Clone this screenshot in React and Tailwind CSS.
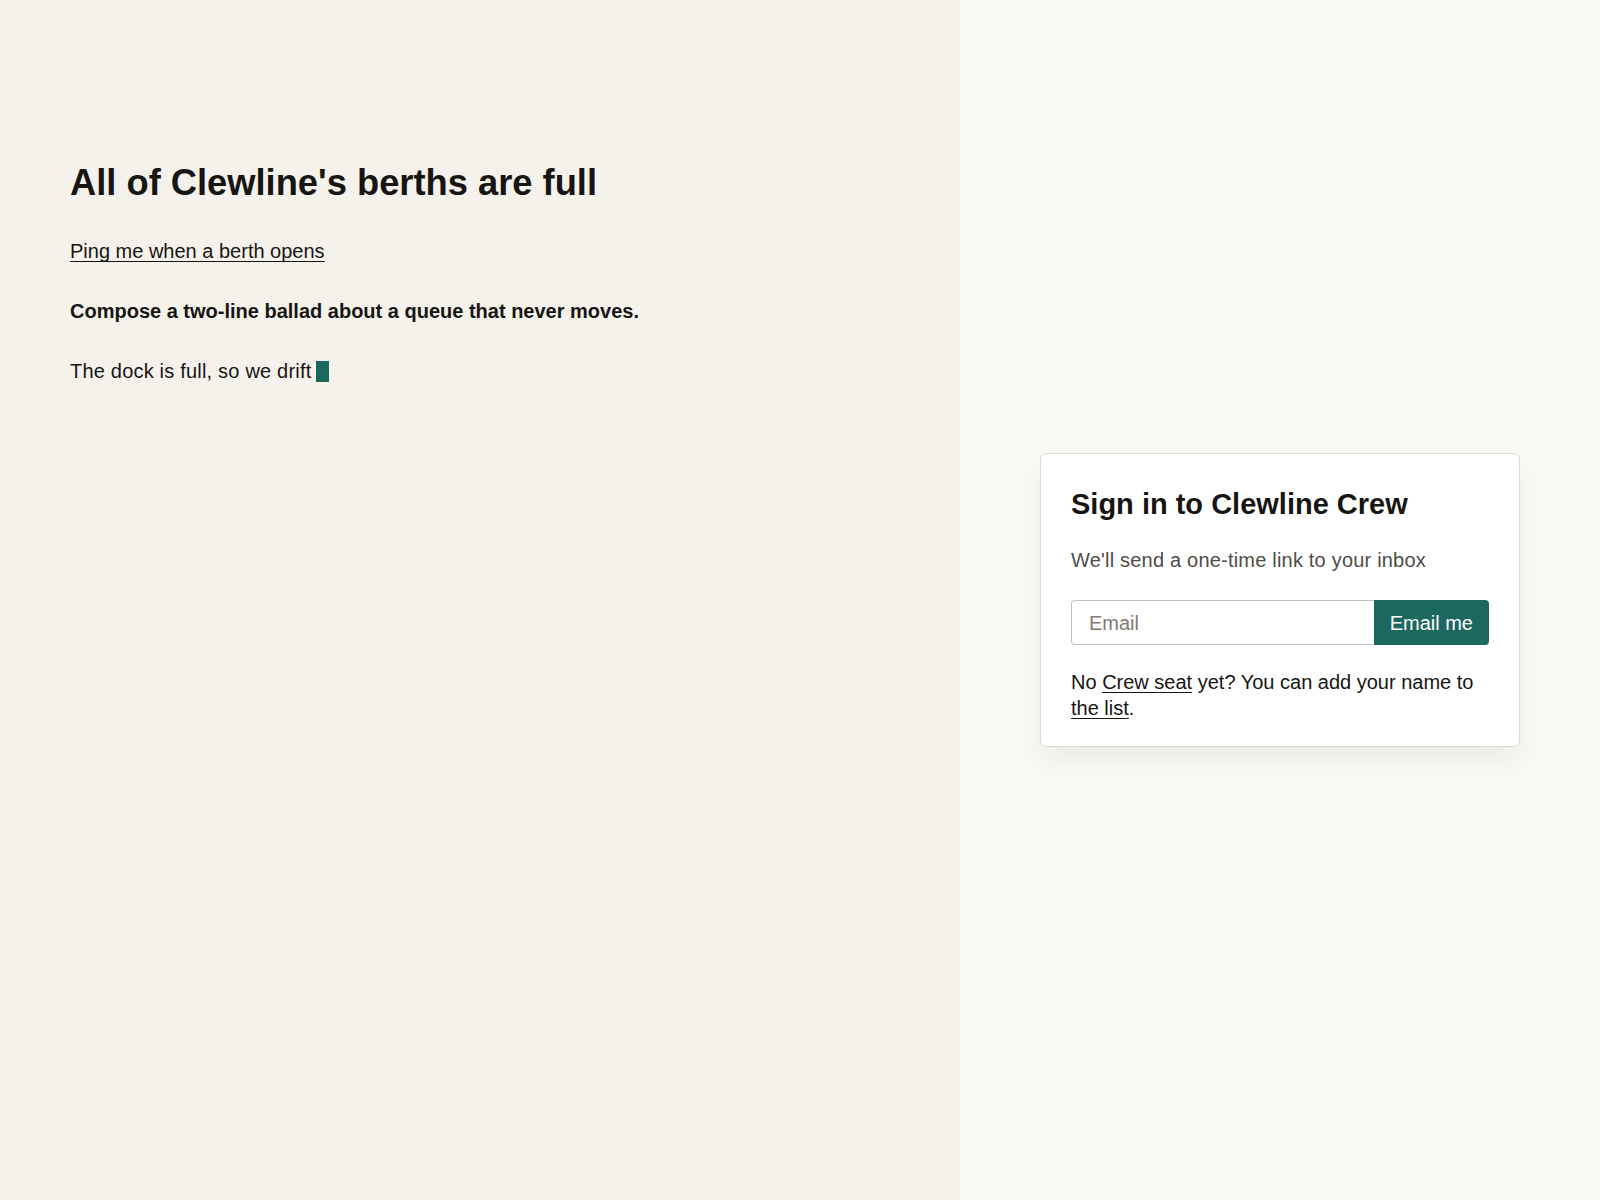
import React from 'react';

const font = { fontFamily: '"Liberation Sans", Arial, sans-serif' };

const linkClass = 'underline decoration-1 underline-offset-[3px] [text-decoration-skip-ink:none]';

const WaitlistPanel = () => (
  <section className="flex w-[960px] shrink-0 flex-col bg-[#f5f2ec] px-[70px] pt-[160px]">
    <h1 className="text-[36.3px] font-bold leading-[45px] text-[#171512]">All of Clewline's berths are full</h1>
    <a href="#" className={`mt-[31px] self-start text-[20px] leading-[30px] text-[#171512] ${linkClass}`}>
      Ping me when a berth opens
    </a>
    <p className="mt-[30px] text-[20px] font-bold leading-[30px] text-[#171512]">
      Compose a two-line ballad about a queue that never moves.
    </p>
    <p className="mt-[30px] flex items-center text-[20px] leading-[30px] tracking-[0.01em] text-[#171512]">
      The dock is full, so we drift
      <span className="ml-[5px] inline-block h-[21px] w-[13px] bg-[#1c675e]" />
    </p>
  </section>
);

const SignInCard = () => (
  <div className="w-[480px] rounded-md border border-[#dfdbd3] bg-white px-[30px] pt-[32px] pb-[25px] shadow-[0_14px_32px_rgba(60,50,30,0.08)]">
    <h2 className="text-[29px] font-bold leading-[36px] text-[#171512]">Sign in to Clewline Crew</h2>
    <p className="mt-[24px] text-[20px] leading-[28px] tracking-[0.01em] text-[#4f4c47]">We'll send a one-time link to your inbox</p>
    <form className="mt-[26px] flex h-[45px]" onSubmit={(e) => e.preventDefault()}>
      <input
        type="email"
        placeholder="Email"
        className="min-w-0 flex-1 rounded-l-[4px] border border-r-0 border-[#c6c2ba] px-[17px] text-[20px] text-[#171512] placeholder:text-[#807c75] focus:outline-none"
        style={font}
      />
      <button type="submit" className="rounded-r-[4px] bg-[#1c675e] px-[16px] text-[20px] text-white" style={font}>
        Email me
      </button>
    </form>
    <p className="mt-[24px] text-[20px] leading-[26px] text-[#171512]">
      No <a href="#" className={linkClass}>Crew seat</a> yet? You can add your name to{' '}
      <a href="#" className={linkClass}>the list</a>.
    </p>
  </div>
);

export default function App() {
  return (
    <div className="flex min-h-[1200px] w-full" style={font}>
      <WaitlistPanel />
      <section className="flex flex-1 items-center justify-center bg-[#fbfaf7]">
        <SignInCard />
      </section>
    </div>
  );
}
